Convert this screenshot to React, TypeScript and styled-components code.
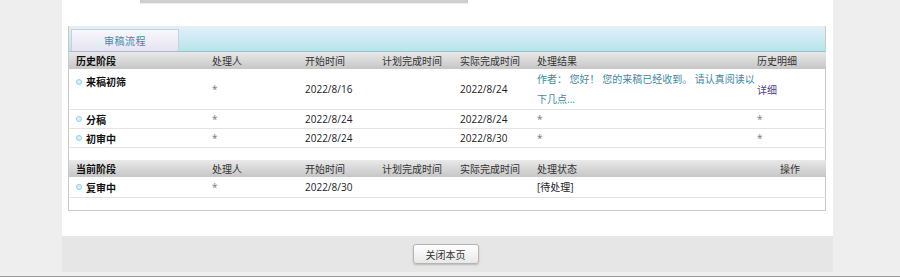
import { FC } from "react";
import styled, { createGlobalStyle } from "styled-components";

const GlobalStyle = createGlobalStyle`
  html, body {
    margin: 0;
    padding: 0;
    background: #eeeeee;
    font-family: "Open Sans", "Noto Sans CJK SC", sans-serif;
    font-size: 10px;
    color: #222;
  }
`;

const Page = styled.div`
  width: 900px;
  height: 277px;
  overflow: hidden;
  background: #eeeeee;
  border-bottom: 1px solid #9a9a9a;
  box-sizing: border-box;
`;

const Panel = styled.div`
  margin-left: 62px;
  width: 771px;
  background: #fff;
  display: flex;
  flex-direction: column;
`;

const TopField = styled.div`
  margin-left: 78px;
  width: 328px;
  height: 3px;
  background: #cfcfcf;
  box-shadow: 0 1px 1px rgba(0, 0, 0, 0.08);
`;

const Box = styled.div`
  margin: 23px 7px 0 6px;
  border: 1px solid #c9c9c9;
  border-top: none;
  height: 185px;
  box-sizing: border-box;
`;

const TabStrip = styled.div`
  height: 25px;
  background: linear-gradient(#e4f0f9, #b5e5eb);
  display: flex;
  align-items: flex-end;
  padding-left: 2px;
  border-bottom: 1px solid #a5bcc2;
`;

const Tab = styled.div`
  width: 108px;
  height: 22px;
  box-sizing: border-box;
  border: 1px solid #c8d0d8;
  border-bottom: none;
  background: linear-gradient(#f7f7fb, #e7e3f3);
  color: #3f8ea4;
  font-size: 10px;
  display: flex;
  align-items: center;
  justify-content: center;
  letter-spacing: 0.5px;
`;

const Table = styled.table`
  width: 100%;
  border-collapse: collapse;
  table-layout: fixed;
`;

const HeadCell = styled.th<{ $bold?: boolean; $align?: string }>`
  height: 17px;
  padding: 0 0 0 7px;
  text-align: ${(p) => p.$align || "left"};
  font-weight: ${(p) => (p.$bold ? 700 : 400)};
  color: ${(p) => (p.$bold ? "#111" : "#333")};
  background: linear-gradient(#e9e9e9, #c6c6c6);
  white-space: nowrap;
`;

const Row = styled.tr<{ $h: number }>`
  height: ${(p) => p.$h}px;
  border-bottom: 1px solid #e3e3e3;
`;

const Cell = styled.td<{ $top?: boolean }>`
  padding: 0 0 0 7px;
  vertical-align: ${(p) => (p.$top ? "top" : "middle")};
  white-space: nowrap;
`;

const Stage = styled.span<{ $top?: boolean }>`
  display: inline-flex;
  align-items: center;
  gap: 4px;
  font-weight: 700;
  color: #111;
  margin-top: ${(p) => (p.$top ? "5px" : "0")};
`;

const Dot = styled.span`
  width: 4px;
  height: 4px;
  border-radius: 50%;
  border: 1px solid #8fd0e8;
  background: #d8f0fa;
`;

const Star = styled.span`
  color: #777;
`;

const Result = styled.div`
  color: #3d8aa0;
  white-space: nowrap;
  line-height: 20px;
`;

const Link = styled.a`
  color: #4b3f8c;
  text-decoration: none;
`;

const Spacer = styled.div<{ $h: number }>`
  height: ${(p) => p.$h}px;
`;

const Footer = styled.div`
  margin-top: 25px;
  height: 36px;
  background: #e6e6e6;
  display: flex;
  justify-content: center;
  align-items: center;
`;

const Button = styled.button`
  width: 66px;
  height: 20px;
  margin-left: -4px;
  border: 1px solid #b5b5b5;
  border-radius: 3px;
  background: linear-gradient(#ffffff, #e8e8e8);
  box-shadow: 0 1px 2px rgba(0, 0, 0, 0.2);
  font-family: "Open Sans", "Noto Sans CJK SC", sans-serif;
  font-size: 10px;
  color: #333;
  padding: 0;
`;

const widths = [136, 93, 77, 78, 77, 220, 76];

const Cols: FC = () => (
  <colgroup>
    {widths.map((w, i) => (
      <col key={i} style={{ width: w }} />
    ))}
  </colgroup>
);

interface HistItem {
  name: string;
  start: string;
  done: string;
  result: string;
  detail: string;
}

const history: HistItem[] = [
  { name: "分稿", start: "2022/8/24", done: "2022/8/24", result: "*", detail: "*" },
  { name: "初审中", start: "2022/8/24", done: "2022/8/30", result: "*", detail: "*" },
];

const App: FC = () => {
  return (
    <Page>
      <GlobalStyle />
      <Panel>
        <TopField />
        <Box>
          <TabStrip>
            <Tab>审稿流程</Tab>
          </TabStrip>
          <Table>
            <Cols />
            <thead>
              <tr>
                <HeadCell $bold>历史阶段</HeadCell>
                <HeadCell>处理人</HeadCell>
                <HeadCell>开始时间</HeadCell>
                <HeadCell>计划完成时间</HeadCell>
                <HeadCell>实际完成时间</HeadCell>
                <HeadCell>处理结果</HeadCell>
                <HeadCell>历史明细</HeadCell>
              </tr>
            </thead>
            <tbody>
              <Row $h={38}>
                <Cell $top>
                  <Stage $top>
                    <Dot />
                    来稿初筛
                  </Stage>
                </Cell>
                <Cell>
                  <Star>*</Star>
                </Cell>
                <Cell>2022/8/16</Cell>
                <Cell></Cell>
                <Cell>2022/8/24</Cell>
                <Cell>
                  <Result>
                    作者： 您好！ 您的来稿已经收到。 请认真阅读以
                    <br />
                    下几点...
                  </Result>
                </Cell>
                <Cell>
                  <Link href="#">详细</Link>
                </Cell>
              </Row>
              {history.map((h) => (
                <Row $h={19} key={h.name}>
                  <Cell>
                    <Stage>
                      <Dot />
                      {h.name}
                    </Stage>
                  </Cell>
                  <Cell>
                    <Star>*</Star>
                  </Cell>
                  <Cell>{h.start}</Cell>
                  <Cell></Cell>
                  <Cell>{h.done}</Cell>
                  <Cell>
                    <Star>{h.result}</Star>
                  </Cell>
                  <Cell>
                    <Star>{h.detail}</Star>
                  </Cell>
                </Row>
              ))}
            </tbody>
          </Table>
          <Spacer $h={12} />
          <Table>
            <Cols />
            <thead>
              <tr>
                <HeadCell $bold>当前阶段</HeadCell>
                <HeadCell>处理人</HeadCell>
                <HeadCell>开始时间</HeadCell>
                <HeadCell>计划完成时间</HeadCell>
                <HeadCell>实际完成时间</HeadCell>
                <HeadCell>处理状态</HeadCell>
                <HeadCell $align="right" style={{ paddingRight: 26 }}>
                  操作
                </HeadCell>
              </tr>
            </thead>
            <tbody>
              <Row $h={20}>
                <Cell>
                  <Stage>
                    <Dot />
                    复审中
                  </Stage>
                </Cell>
                <Cell>
                  <Star>*</Star>
                </Cell>
                <Cell>2022/8/30</Cell>
                <Cell></Cell>
                <Cell></Cell>
                <Cell>[待处理]</Cell>
                <Cell></Cell>
              </Row>
            </tbody>
          </Table>
        </Box>
        <Footer>
          <Button>关闭本页</Button>
        </Footer>
      </Panel>
    </Page>
  );
};

export default App;
